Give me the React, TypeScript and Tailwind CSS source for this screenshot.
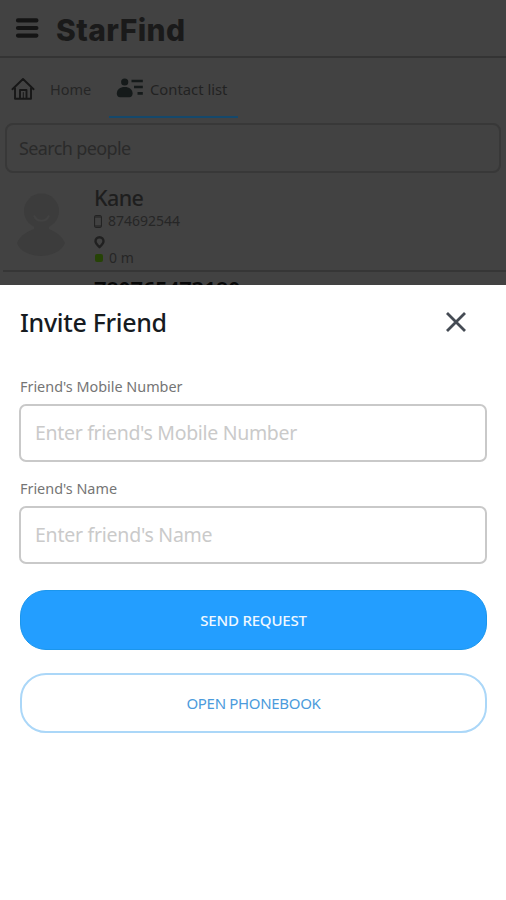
import React from "react";

const sans = "font-['Noto_Sans','Open_Sans',sans-serif]";

function MenuIcon() {
  return (
    <svg width="24" height="22" viewBox="0 0 24 22" stroke="#141414" strokeWidth="4.2" strokeLinecap="round">
      <path d="M3 3.400h18.400M3 11h18.400M3 18.600h18.400" />
    </svg>
  );
}

function HomeIcon() {
  return (
    <svg width="24" height="24" viewBox="0 0 24 24" fill="none" stroke="#171717" strokeWidth="1.9" strokeLinejoin="round" strokeLinecap="round">
      <path d="M1.400 12.200 12 2l10.600 10.200M4 10.800v11h16v-11M9 21.500v-8.500h6.500v8.500" />
      <path d="M12.300 15.500v6" strokeWidth="1" />
    </svg>
  );
}

function ContactIcon() {
  return (
    <svg width="28" height="20" viewBox="0 0 28 20" fill="#151a1a">
      <circle cx="8.700" cy="4" r="3.600" />
      <path d="M.8 15.600C.8 11.500 4 9 8.700 9s7.900 2.500 7.900 6.600c0 2.500-1.300 3.600-3.200 3.600H4C2.100 19.200.8 18.100.8 15.600Z" />
      <path d="M15.500 3h11.300M18 9h8.800M21.500 15.400h5.300" stroke="#151a1a" strokeWidth="2.600" fill="none" />
    </svg>
  );
}

function Avatar() {
  return (
    <svg width="50" height="64" viewBox="0 0 50 64" fill="#3c3c3c">
      <ellipse cx="25.500" cy="18" rx="17.500" ry="17.500" />
      <path d="M18 31h15v5c7 3 13 7 16 14-3 8-14 13-24 13S3 58 1 50c3-7 9-11 17-14Z" />
      <path d="M18 22.500c3 7 12 7 15 0" fill="none" stroke="#424242" strokeWidth="2" />
    </svg>
  );
}

function Field({ label, placeholder, textCls }: { label: string; placeholder: string; textCls: string }) {
  return (
    <div>
      <div className="h-5 whitespace-nowrap pl-px text-[14.4px] leading-5 text-[#757575]">{label}</div>
      <div className="mt-[7px] flex h-[58px] items-center rounded-[7px] border-2 border-[#c9c9c9] bg-white pl-[14px]">
        <span className={`whitespace-nowrap text-[19.5px] leading-6 text-[#cacaca] ${textCls}`}>{placeholder}</span>
      </div>
    </div>
  );
}

export default function App() {
  return (
    <div className={`flex h-[900px] w-[506px] flex-col overflow-hidden bg-[#424242] ${sans}`}>
      <div className="h-[285px] shrink-0 overflow-hidden">
        <header className="flex h-[58px] items-center border-b-2 border-[#343434] pl-[15px]">
          <MenuIcon />
          <span className="ml-[17px] mt-[3px] font-['Inter',sans-serif] text-[30px] font-extrabold leading-9 tracking-[0.4px] text-[#1a1a1a]">StarFind</span>
        </header>
        <nav className="flex h-[60px]">
          <div className="flex w-[109px] items-center pl-[11px] pt-px">
            <HomeIcon />
            <span className="ml-[15px] mt-[2px] text-[14.5px] text-[#262626]">Home</span>
          </div>
          <div className="flex w-[129px] items-center border-b-2 border-[#15486b] pl-[7px] pt-[2px]">
            <ContactIcon />
            <span className="ml-[6px] mt-[2px] whitespace-nowrap text-[14.8px] text-[#222]">Contact list</span>
          </div>
        </nav>
        <div className="mx-[5px] mt-[5px] flex h-[50px] items-center rounded-[8px] border-2 border-[#383838] pl-[12px]">
          <span className="mt-px text-[18px] tracking-[-0.62px] text-[#2a2a2a]">Search people</span>
        </div>
        <div className="ml-[3px] flex h-[99px] border-b-2 border-[#363636] pl-[13px]">
          <div className="w-[78px] pt-[20px]">
            <Avatar />
          </div>
          <div className="pt-[11px]">
            <div className="h-[28px] text-[21.5px] font-medium leading-[27px] tracking-[-0.6px] text-[#1e1e1e]">Kane</div>
            <div className="flex h-[18px] items-center">
              <svg width="8" height="13" viewBox="0 0 8 13" fill="none" stroke="#202020">
                <rect x=".6" y=".6" width="6.800" height="11.800" rx="1" />
                <path d="M1 2h6M1 11h6" />
              </svg>
              <span className="ml-[6px] text-[14px] leading-[18px] text-[#262626]">874692544</span>
            </div>
            <svg className="mt-[6px]" width="11" height="13" viewBox="0 0 11 13" fill="none" stroke="#202020" strokeWidth="2.400">
              <path d="M5.500 11C3 8.800 1.500 7.200 1.500 5.200a4 4 0 0 1 8 0c0 2-1.500 3.600-4 5.800Z" />
            </svg>
            <div className="flex h-[17px] items-center">
              <div className="ml-px size-2 rounded-[2px] bg-[#264306]" />
              <span className="ml-[6px] text-[14px] leading-[17px] text-[#262626]">0 m</span>
            </div>
          </div>
        </div>
        <div className="ml-[94px] mt-[3px] whitespace-nowrap text-[22px] font-semibold leading-7 tracking-[-0.4px] text-[#080808]">780765473180</div>
      </div>

      <section className="flex grow flex-col bg-white px-[19px]">
        <div className="flex h-[74px] items-center justify-between pr-[20px]">
          <h1 className="whitespace-nowrap pl-px text-[25px] font-medium leading-8 tracking-[-0.32px] text-[#171b1f]">Invite Friend</h1>
          <svg width="22" height="22" viewBox="0 0 22 22" stroke="#454b54" strokeWidth="2.800">
            <path d="m2 2 18 18M20 2 2 20" />
          </svg>
        </div>
        <div className="mt-[18px] flex flex-col gap-[17px]">
          <Field label="Friend's Mobile Number" placeholder="Enter friend's Mobile Number" textCls="tracking-[-0.32px]" />
          <Field label="Friend's Name" placeholder="Enter friend's Name" textCls="tracking-[-0.25px]" />
        </div>
        <button className="ml-px mt-[26px] h-[60px] rounded-[26px] border border-[#1b96ed] bg-[#239eff] text-[15px] font-medium tracking-[-0.2px] text-[#eff8ff]">SEND REQUEST</button>
        <button className="ml-px mt-[23px] h-[60px] rounded-[26px] border-2 border-[#abd7f8] bg-white text-[15px] tracking-[-0.32px] text-[#4b9bdc]">OPEN PHONEBOOK</button>
      </section>
    </div>
  );
}
